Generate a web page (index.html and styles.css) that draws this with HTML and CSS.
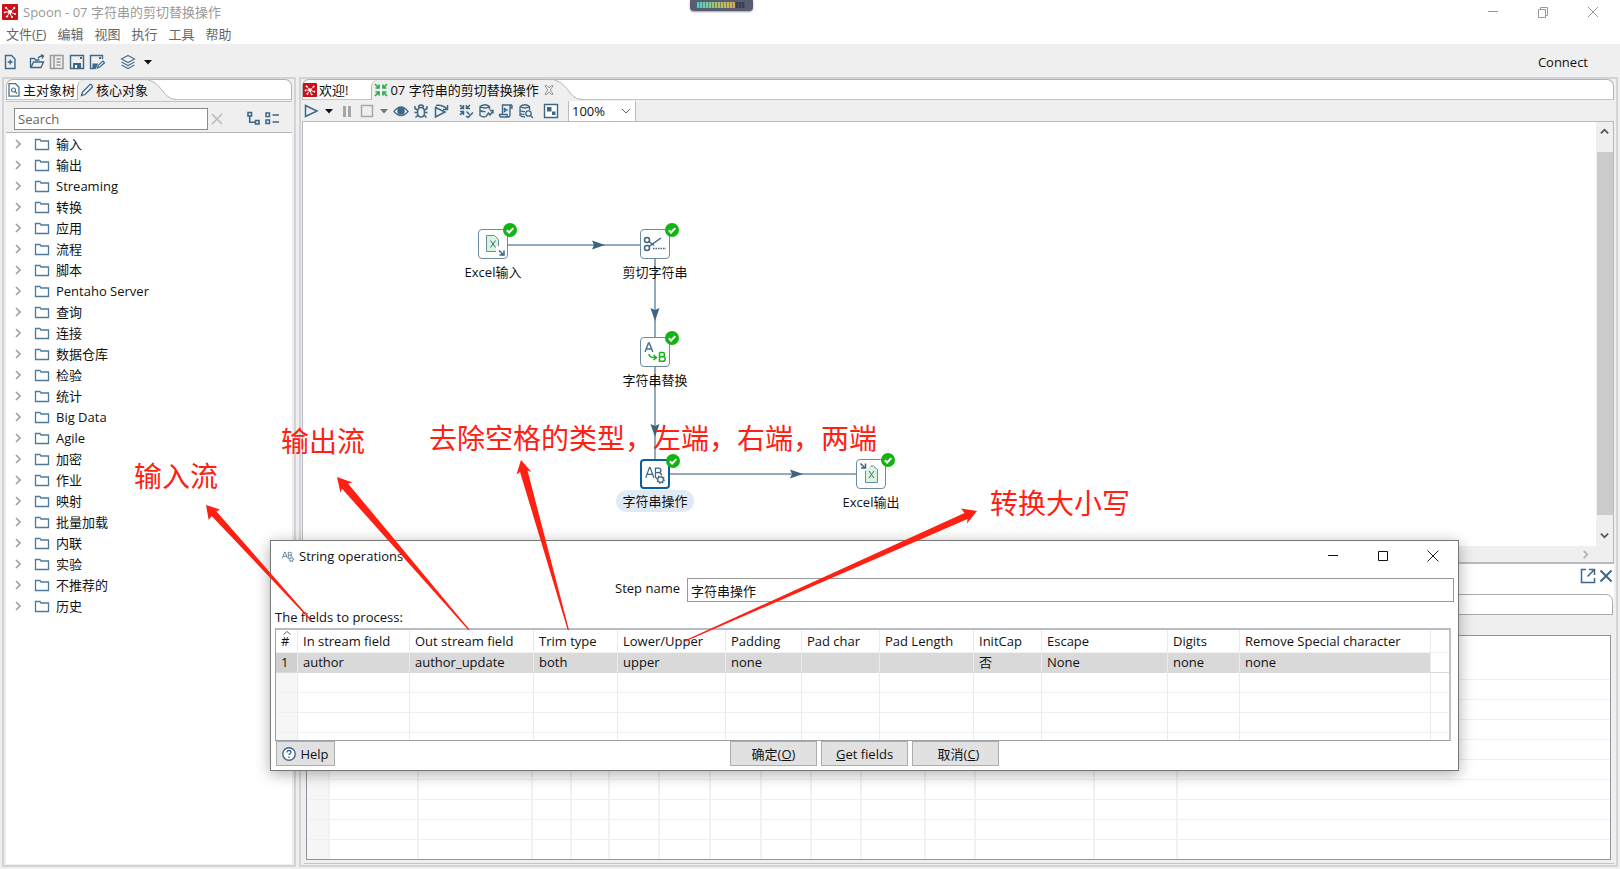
FILE: index.html
```html
<!DOCTYPE html>
<html lang="zh-CN">
<head>
<meta charset="utf-8">
<title>Spoon - 07 字符串的剪切替换操作</title>
<link rel="stylesheet" href="styles.css">
</head>
<body>
<svg class="defs" aria-hidden="true">
  <symbol id="logo" viewBox="0 0 16 16"><rect width="16" height="16" rx="1" fill="#cc0f16"/><g stroke="#fff" stroke-width="1" fill="#fff"><path d="M8 8 4 3.500M8 8l4.500-4M8 8H3M8 8l5 2M8 8l-3 4.500M8 8l1.500 5" fill="none"/><circle cx="8" cy="8" r="1.400"/><circle cx="4" cy="3.800" r=".7"/><circle cx="12.300" cy="4" r=".7"/><circle cx="2.800" cy="8.500" r=".6"/><circle cx="13" cy="10" r=".6"/><circle cx="5" cy="12.500" r=".7"/><circle cx="10" cy="13" r=".6"/></g></symbol>
  <symbol id="folder" viewBox="0 0 16 14"><path d="M1.500 12.500v-10h4.500l1 1.500h7.500v8.500z" fill="#fff" stroke="#4d7a9b" stroke-width="1.300"/></symbol>
  <symbol id="chev" viewBox="0 0 8 10"><path d="m2 1 4 4-4 4" fill="none" stroke="#a0a0a0" stroke-width="1.700"/></symbol>
  <symbol id="down" viewBox="0 0 8 8"><path d="M0 2h8L4 6.500z" fill="currentColor"/></symbol>
  <symbol id="check" viewBox="0 0 14 14"><circle cx="7" cy="7" r="7" fill="#12b312"/><path d="m3.800 7.200 2.300 2.300 4.200-4.400" fill="none" stroke="#fff" stroke-width="2"/></symbol>
  <symbol id="x" viewBox="0 0 12 12"><path d="m1 1 10 10M11 1 1 11" stroke="currentColor" stroke-width="1.500"/></symbol>
  <symbol id="abgear" viewBox="0 0 28 28"><g fill="none" stroke="#3d6480" stroke-width="1.300"><path d="m4 18 4-11h.8l4 11M5.500 14.500h6M14.500 18V7.600h3q3 0 3 2.400t-3 2.500h-3M17.500 12.500q3.500.2 3.500 2.500"/><path d="M14.500 18h1.500"/><circle cx="20" cy="20" r="3"/><circle cx="20" cy="20" r="4" stroke-dasharray="1.500 1.600"/></g></symbol>
</svg>

<header class="title">
  <svg class="i16"><use href="#logo"/></svg>
  <span class="title-text">Spoon - 07 字符串的剪切替换操作</span>
  <div class="winbtns">
    <button aria-label="最小化"><svg viewBox="0 0 12 12"><path d="M1 5.500h10" stroke="#999"/></svg></button>
    <button aria-label="还原"><svg viewBox="0 0 12 12"><path d="M1.500 3.500h7v8h-7zM3.500 3.500v-2h7v8h-2" fill="none" stroke="#999"/></svg></button>
    <button aria-label="关闭"><svg viewBox="0 0 12 12"><path d="m1 1 10 10M11 1 1 11" stroke="#999"/></svg></button>
  </div>
</header>
<div class="meter"><i class="bars"></i></div>
<nav class="menu">
  <a href="#">文件(<u>F</u>)</a><a href="#">编辑</a><a href="#">视图</a><a href="#">执行</a><a href="#">工具</a><a href="#">帮助</a>
</nav>
<div class="maintools">
  <button class="ib" aria-label="新建"><svg viewBox="0 0 16 16"><path d="M3.500 1.500h6l3.500 3.500v9.500H3.500zM8.200 5.500v5M5.700 8h5" fill="none" stroke="#3d6787" stroke-width="1.400"/></svg></button>
  <button class="ib open" aria-label="打开"><svg viewBox="0 0 16 16"><path d="M1.500 13.500v-9h4l1 1.500h4M2 13.500l2.500-5.500h10l-2.500 5.500zM9 4.500q1-2.500 5-2.500M12 .7l2.500 1.300-1.500 2.500" fill="none" stroke="#3d6787" stroke-width="1.300"/></svg></button>
  <button class="ib" aria-label="资源库"><svg viewBox="0 0 16 16"><path d="M1.500 1.500h12.500v13h-12.500zM5 1.500v13M7.500 5h4M7.500 8h4M7.500 11h4" fill="none" stroke="#999" stroke-width="1.500"/></svg></button>
  <button class="ib" aria-label="保存"><svg viewBox="0 0 16 16"><path d="M1.500 1.500h13v13h-13z" fill="none" stroke="#3d6787" stroke-width="1.400"/><path d="M4 9h8v5.500H4zM11 3h2v2h-2z" fill="#3d6787"/><path d="M6 11h2v3H6z" fill="#fff"/></svg></button>
  <button class="ib" aria-label="另存为"><svg viewBox="0 0 16 16"><path d="M13.500 5V1.500h-12v13h5" fill="none" stroke="#3d6787" stroke-width="1.400"/><path d="M3.500 9.500H9L7 14.500H3.500zM10 3h2v2h-2z" fill="#3d6787"/><path d="m8.500 14 1-3 4.500-4 1.500 1.800-4.500 4z" fill="#fff" stroke="#3d6787" stroke-width="1.200"/></svg></button>
  <button class="ib layers" aria-label="透视图"><svg viewBox="0 0 16 16"><path d="M8 1.500 14.500 5 8 8.500 1.500 5zM1.500 8 8 11.500 14.500 8M1.500 11 8 14.500l6.500-3.500" fill="none" stroke="#4d7592" stroke-width="1.200"/></svg></button>
  <button class="caret" aria-label="更多"><svg><use href="#down"/></svg></button>
  <a class="connect" href="#">Connect</a>
</div>

<main class="work">
  <section class="panel">
    <div class="tabs">
      <button class="tab"><svg class="i14" viewBox="0 0 14 14"><path d="M2 .7h6.500l3.500 3.500v9H2z" fill="none" stroke="#4d7592" stroke-width="1.300"/><circle cx="6.500" cy="7" r="2" fill="none" stroke="#4d7592" stroke-width="1.200"/><path d="m8 8.500 2 2" stroke="#4d7592" stroke-width="1.300"/></svg>主对象树</button>
      <button class="tab on"><svg class="i14" viewBox="0 0 14 14"><path d="m1.500 12.500 1-3.500 7.500-7.500q2-.5 2.500 2.500L5 11.500z" fill="none" stroke="#3d6787" stroke-width="1.300"/></svg>核心对象</button>
      <svg class="tail" viewBox="0 0 32 21"><path d="M0 .5C18 .5 18 20.500 32 20.500V21H0z" fill="#efefef"/><path d="M0 .5C18 .5 18 20.500 32 20.500" fill="none" stroke="#b4b4b4"/></svg>
    </div>
    <div class="searchbar">
      <input class="search" type="text" placeholder="Search" aria-label="Search">
      <button class="clear" aria-label="清除"><svg><use href="#x"/></svg></button>
      <button class="ib expand" aria-label="展开"><svg viewBox="0 0 16 16"><path d="M3 1.500h3.500V5H3zM10.500 9.500H14V13h-3.500zM4.700 5v6.200h5.800" fill="none" stroke="#3d6787" stroke-width="1.600"/></svg></button>
      <button class="ib" aria-label="折叠"><svg viewBox="0 0 16 16"><path d="M2 2h3.500v3.500H2zM2 9h3.500v3.500H2zM8.500 4H15M8.500 11H15" fill="none" stroke="#3d6787" stroke-width="1.500"/></svg></button>
    </div>
    <ul class="tree" id="tree"></ul>
  </section>

  <section class="panel right">
    <div class="tabs">
      <button class="tab"><svg class="i14"><use href="#logo"/></svg>欢迎!</button>
      <button class="tab on wide"><svg class="i14" viewBox="0 0 14 14"><path d="m1 1 4 4M13 1 9 5M1 13l4-4M13 13 9 9M1.500 5H5V1.500M9 1.500V5h3.500M1.500 9H5v3.500M12.500 9H9v3.500" fill="none" stroke="#2faa4c" stroke-width="1.700"/></svg>07 字符串的剪切替换操作<svg class="tabx" viewBox="0 0 10 10"><path d="M1 .7h2l2 2.500 2-2.500h2L6.300 5 9 9.300H7L5 6.800 3 9.300H1L3.700 5z" fill="#fff" stroke="#777" stroke-width=".8"/></svg></button>
      <svg class="tail" viewBox="0 0 32 21"><path d="M0 .5C18 .5 18 20.500 32 20.500V21H0z" fill="#efefef"/><path d="M0 .5C18 .5 18 20.500 32 20.500" fill="none" stroke="#b4b4b4"/></svg>
    </div>
    <div class="tools">
      <button class="ib" aria-label="运行"><svg viewBox="0 0 16 16"><path d="M2.500 2.500 14 8 2.500 13.500z" fill="none" stroke="#3d6787" stroke-width="1.500"/></svg></button>
      <button class="caret c12" aria-label="运行选项"><svg><use href="#down"/></svg></button>
      <button class="ib" aria-label="暂停"><svg viewBox="0 0 16 16"><path d="M4 3h3v11H4zM9 3h3v11H9z" fill="#a6a6a6"/></svg></button>
      <button class="ib" aria-label="停止"><svg viewBox="0 0 16 16"><path d="M2.500 2.500h11v11h-11z" fill="none" stroke="#a6a6a6" stroke-width="1.500"/></svg></button>
      <button class="caret c10" aria-label="停止选项"><svg><use href="#down"/></svg></button>
      <button class="ib" aria-label="预览"><svg viewBox="0 0 16 16"><path d="M1 8.500q7-9 14 0q-7 8-14 0z" fill="#fff" stroke="#3d6787" stroke-width="1.300"/><circle cx="8" cy="8" r="3.800" fill="#3d6787"/></svg></button>
      <button class="ib" aria-label="调试"><svg viewBox="0 0 16 16"><path d="M8 4.500c3 0 3.500 2 3.500 5s-1.500 4.500-3.500 4.500-3.500-1.500-3.500-4.500.5-5 3.500-5zM5.500 4.500q0-2.500 2.500-2.500t2.500 2.500M4.500 7 2 5.500V3M11.500 7 14 5.500V3M4.500 9.500H1.500M11.500 9.500h3M5 12l-2.500 2.500M11 12l2.500 2.500" fill="none" stroke="#3d6787" stroke-width="1.500"/></svg></button>
      <button class="ib" aria-label="重放"><svg viewBox="0 0 16 16"><path d="M2.500 4.500 12 9l-9.500 5zM3 2.500q6-1.500 11 3.500M14.500 2v4.500H10" fill="none" stroke="#3d6787" stroke-width="1.500"/></svg></button>
      <button class="ib gap5" aria-label="校验"><svg viewBox="0 0 16 16"><path d="m2 2 3.500 3.500M12 2 8.500 5.500M2 12l3.500-3.500M2 5.500h3.500V2M8.500 2v3.500H12M2 8.500h3.500V12M8.500 8.500l3 3M8 13l2 1.500L15 9.500" fill="none" stroke="#3d6787" stroke-width="1.500"/></svg></button>
      <button class="ib" aria-label="影响分析"><svg viewBox="0 0 16 16"><path d="M2 3.500q5-3.500 9.500 0v3M2 3.500v9q2 1.500 5 1.500M2 3.500q5 3 9.500 0M2 7.500q3 1.500 5.500 1M7.500 14l3-4 1.500 2 3-4M12 7.500h3v3" fill="none" stroke="#3d6787" stroke-width="1.400"/></svg></button>
      <button class="ib" aria-label="SQL"><svg viewBox="0 0 16 16"><path d="M4.500 11V2h9.500q-2 0-2 3v7q0 2-2 2H3q-1.500 0-1.500-2.500h7.500q0 2.500 1.500 2.500M14 2v3h-2M6.500 5.500 9 7 6.500 8.500z" fill="none" stroke="#3d6787" stroke-width="1.400"/></svg></button>
      <button class="ib" aria-label="浏览数据库"><svg viewBox="0 0 16 16"><path d="M2 3.500q5-3.500 9.500 0v3.500M2 3.500v9q2 1.500 5 1.500M2 3.500q5 3 9.500 0M2 7.500q3 1.500 5 1M2 10.500q2 1 4.500 1M12.500 12.500l2.500 2.500" fill="none" stroke="#3d6787" stroke-width="1.300"/><circle cx="10.500" cy="10.500" r="2.700" fill="none" stroke="#3d6787" stroke-width="1.300"/></svg></button>
      <button class="ib gap5" aria-label="显示结果"><svg viewBox="0 0 16 16"><path d="M1.500 1.500h13v13h-13z" fill="#fff" stroke="#3d6787" stroke-width="1.400"/><path d="M4 4h4.500v4.500H4zM9 8.500h3.500V12H9z" fill="#3d6787"/></svg></button>
      <label class="zoom"><select aria-label="缩放"><option>100%</option></select><svg viewBox="0 0 10 10"><path d="m1 3 4 4 4-4" fill="none" stroke="#666"/></svg></label>
    </div>
    <div class="editor">
      <div class="canvas">
        <svg class="hops" width="700" height="420">
          <g stroke="#6f8fa8" stroke-width="1.500"><path d="M204 123h134M352 137v80M352 245v92M367 352h188"/></g>
          <g fill="#3d6480"><path d="m289 118.500 13 4.500-13 4.500 2-4.500zM347.500 186l4.500 13 4.500-13-4.500 2zM347.500 302l4.500 13 4.500-13-4.500 2zM487 347.500l13 4.500-13 4.500 2-4.500z"/></g>
        </svg>
        <div class="node n1"><span class="box"><svg viewBox="0 0 28 28"><path d="M7.500 5.500h8l4 4v12h-12z" fill="#daf3dc" stroke="#6b8ca3"/><path d="m11.500 10.500 5 7M16.500 10.500l-5 7" stroke="#3d6480"/><path d="m17 16 9 1v9h-9z" fill="#fff"/><path d="m20 20.500 4.500 4.500M25 20.500V25h-4.500" fill="none" stroke="#3d6480" stroke-width="1.500"/></svg><svg class="ok"><use href="#check"/></svg></span><span class="lbl">Excel输入</span></div>
        <div class="node n2"><span class="box"><svg viewBox="0 0 28 28"><g fill="none" stroke="#3d6480" stroke-width="1.500"><circle cx="6" cy="10" r="2.500"/><circle cx="6" cy="18" r="2.500"/><path d="m8 11.500 5 4M8 16.500 20 8"/><path d="M12 18.500h13" stroke-dasharray="1.500 1"/></g></svg><svg class="ok"><use href="#check"/></svg></span><span class="lbl">剪切字符串</span></div>
        <div class="node n3"><span class="box"><svg viewBox="0 0 28 28"><path d="m4 14 3.500-9h.8l3.500 9M5.200 11h5.500" fill="none" stroke="#4d7592" stroke-width="1.500"/><path d="M18.500 14.500v8.800h3.200q2.500 0 2.500-2.400t-2.500-2.200h-3M18.500 14.500h3q2 0 2 2t-2 2.200M8 16q0 4 7 3.500M12.500 17l3 2.500-3 2.500" fill="none" stroke="#12b312" stroke-width="1.500"/></svg><svg class="ok"><use href="#check"/></svg></span><span class="lbl">字符串替换</span></div>
        <div class="node n4"><span class="box sel"><svg><use href="#abgear"/></svg><svg class="ok"><use href="#check"/></svg></span><span class="lbl pill">字符串操作</span></div>
        <div class="node n5"><span class="box"><svg viewBox="0 0 28 28"><path d="M8.500 10.500v12h12v-13l-4-3.500h-3" fill="#daf3dc" stroke="#6b8ca3"/><path d="m12 11 5 7M17 11l-5 7" stroke="#3d6480"/><path d="m3.500 3.500 4.500 4.500M8.500 3.500V8H4" fill="none" stroke="#3d6480" stroke-width="1.500"/></svg><svg class="ok"><use href="#check"/></svg></span><span class="lbl">Excel输出</span></div>
      </div>
      <div class="vscroll"><svg viewBox="0 0 10 10"><path d="m1 7 4-4 4 4" fill="none" stroke="#555" stroke-width="2"/></svg><i class="thumb"></i><svg viewBox="0 0 10 10"><path d="m1 3 4 4 4-4" fill="none" stroke="#555" stroke-width="2"/></svg></div>
      <div class="hscroll"><svg viewBox="0 0 10 10"><path d="m3 1 4 4-4 4" fill="none" stroke="#b0b0b0" stroke-width="1.800"/></svg></div>
    </div>
    <div class="reshead">
      <button class="ib" aria-label="最大化"><svg viewBox="0 0 16 16"><path d="M6 1.500H1.500v13h13V10M9 1.500h5.500V7M14 2 7.500 8.500" fill="none" stroke="#3d6787" stroke-width="1.500"/></svg></button>
      <button class="ib" aria-label="关闭结果"><svg viewBox="0 0 16 16"><path d="m2.500 2.500 11 11M13.500 2.500l-11 11" stroke="#3d6787" stroke-width="2"/></svg></button>
    </div>
    <div class="results">
      <div class="restabs"></div>
      <div class="resbar"></div>
      <div class="resgrid" id="resgrid"></div>
    </div>
  </section>
</main>

<section class="dialog" role="dialog" aria-label="String operations">
  <div class="dtitle"><svg class="i16"><use href="#abgear"/></svg><span>String operations</span>
    <div class="dwin">
      <button aria-label="Minimize"><svg viewBox="0 0 12 12"><path d="M1 5.500h10" stroke="#111"/></svg></button>
      <button aria-label="Maximize"><svg viewBox="0 0 12 12"><path d="M1.500 1.500h9v9h-9z" fill="none" stroke="#111"/></svg></button>
      <button aria-label="Close"><svg viewBox="0 0 12 12"><path d="m.5.5 11 11M11.500.5l-11 11" stroke="#222"/></svg></button>
    </div>
  </div>
  <div class="step"><label for="stepname">Step name</label><input id="stepname" type="text" value="字符串操作"></div>
  <p class="cap">The fields to process:</p>
  <div class="gridbox">
    <table class="fields">
      <colgroup><col class="w22"><col class="w112"><col class="w124"><col class="w84"><col class="w108"><col class="w76"><col class="w78"><col class="w94"><col class="w68"><col class="w126"><col class="w72"><col class="w190"><col></colgroup>
      <thead><tr><th class="num"><svg class="sort" viewBox="0 0 8 4"><path d="m.5 3.500 3.500-3 3.500 3" fill="none" stroke="#666"/></svg>#</th><th>In stream field</th><th>Out stream field</th><th>Trim type</th><th>Lower/Upper</th><th>Padding</th><th>Pad char</th><th>Pad Length</th><th>InitCap</th><th>Escape</th><th>Digits</th><th>Remove Special character</th><th></th></tr></thead>
      <tbody id="rows"><tr class="hit"><td>1</td><td>author</td><td>author_update</td><td>both</td><td>upper</td><td>none</td><td></td><td></td><td>否</td><td>None</td><td>none</td><td>none</td><td></td></tr></tbody>
    </table>
  </div>
  <div class="foot">
    <button class="btn help"><svg class="i14" viewBox="0 0 14 14"><circle cx="7" cy="7" r="6.200" fill="#fff" stroke="#3d6787" stroke-width="1.400"/><path d="M5 5.500q0-2 2-2t2 1.800q0 1-1.200 1.500-.8.400-.8 1.200M7 9.500V11" fill="none" stroke="#3d6787" stroke-width="1.300"/></svg>Help</button>
    <div class="acts"><button class="btn">确定(<u>O</u>)</button><button class="btn"><u>G</u>et fields</button><button class="btn cancel">取消(<u>C</u>)</button></div>
  </div>
</section>

<div class="notes">
  <svg width="1200" height="660"><g fill="#ff2014"><path d="m206 505 14 4.500-3.500 2 96 109.500-.8.700L211.700 516l-3 4z"/><path d="m337 477 15.500 5.500-4.500 1L469.500 629.500l-1 .7L341.800 488.500l-1.300 4.500z"/><path d="m521 460 10.500 12-4-1.500L569 630l-1.200.2L520 472l-3.500 2.500z"/><path d="m977 511-16-2.500 3.500 4.500L683.500 641l.5 1 283.500-123-.5 4.500z"/></g></svg>
  <span class="a1">输入流</span><span class="a2">输出流</span><span class="a3">去除空格的类型，左端，右端，两端</span><span class="a4">转换大小写</span>
</div>
<script src="app.js"></script>
</body>
</html>
```
FILE: styles.css
```css
* { box-sizing: border-box; }
body {
  margin: 0; min-height: 100vh; display: flex; flex-direction: column; position: relative;
  overflow: hidden; background: #efefef; color: #111;
  font: 13px/20px "Open Sans", "Noto Sans CJK SC", sans-serif;
}
button, input, select { font: inherit; color: inherit; margin: 0; padding: 0; border: 0; background: none; border-radius: 0; }
a { color: inherit; text-decoration: none; }
svg { display: block; flex: none; }
.defs { position: absolute; width: 0; height: 0; }
.i16 { width: 16px; height: 16px; }
.i14 { width: 14px; height: 14px; }

.title { display: flex; align-items: center; gap: 5px; height: 24px; padding: 0 2px; background: #fff; color: #999; }
.title-text { flex: 1; }
.winbtns, .dwin { display: flex; }
.winbtns button, .dwin button { width: 50px; height: 24px; display: grid; place-items: center; }
.winbtns svg, .dwin svg { width: 12px; height: 12px; }
.meter { position: absolute; left: 690px; top: 0; width: 63px; height: 11px; padding: 2px 7px; background: #5a5d70; border-radius: 0 0 4px 4px; box-shadow: 0 1px 2px #9a9ca8; }
.bars { display: block; width: 48px; height: 6px; background: repeating-linear-gradient(90deg, transparent 0 2px, #5a5d7099 2px 3px), linear-gradient(90deg, #45d3d0, #9fc66a 40%, #e5b04c 78%, #3b3e50 79%); }
.menu { display: flex; gap: 11px; height: 20px; padding-left: 6px; background: #fff; color: #666; }
.maintools { display: flex; align-items: center; gap: 4px; height: 33px; padding: 3px 32px 0 2px; }
.ib { width: 16px; height: 16px; flex: none; }
.ib svg { width: 16px; height: 16px; }
.open { margin-left: 7px; }
.layers { margin-left: 11px; }
.caret { width: 16px; display: grid; place-items: center; color: #111; }
.caret svg { width: 8px; height: 8px; }
.c12 { width: 12px; }
.c10 { width: 10px; color: #777; }
.connect { margin-left: auto; }

.work { flex: 1; display: grid; grid-template-columns: 294px 1fr; gap: 3px; padding: 0 2px 2px; }
.panel { display: flex; flex-direction: column; min-width: 0; padding: 0 2px 1px; border: 2px solid #d2d3d6; background: #efefef; }
.right { padding: 0 2px 1px 1px; }
.tabs { position: relative; z-index: 0; display: flex; height: 21px; background: linear-gradient(#c4c4c4, #c4c4c4) bottom / 100% 1px no-repeat #fff; border: 1px solid #b4b4b4; border-width: 1px 1px 0; border-radius: 7px 7px 0 0; }
.tab { display: flex; align-items: center; gap: 2px; padding: 0; white-space: nowrap; height: 20px; }
.tab.on { background: #efefef; border-left: 1px solid #b4b4b4; border-radius: 7px 0 0 0; padding-left: 2px; }
.tab + .tab { margin-left: 2px; }
.tab + .tab.wide { margin-left: 23px; }
.tabx { width: 10px; height: 10px; margin-left: 3px; }
.tail { position: relative; z-index: -1; width: 32px; height: 21px; margin: -1px 0 0 -4px; }
.searchbar { display: flex; align-items: center; height: 32px; padding: 3px 10px 0 8px; margin-top: 1px; border-top: 1px solid #c4c4c4; border-bottom: 1px solid #b4b4b4; }
.search { width: 194px; height: 22px; padding: 0 3px; border: 1px solid #8a8a8a; background: #fff; }
.search::placeholder { color: #666; opacity: 1; }
.clear { width: 12px; height: 12px; margin-left: 3px; color: #bbb; }
.clear svg { width: 12px; height: 12px; }
.expand { margin: 0 3px 0 22px; }
.tree { flex: 1; margin: 0; padding: 0 0 0 8px; list-style: none; background: #fff; }
.tree li { display: flex; align-items: center; height: 21px; }
.tree button { width: 8px; height: 10px; }
.tree button svg { width: 8px; height: 10px; }
.tree .fold { width: 16px; height: 14px; margin: 0 6px 0 12px; }

.tools { display: flex; align-items: center; gap: 4px; height: 21px; padding-left: 1px; }
.gap5 { margin-left: 5px; }
.zoom { display: flex; align-items: center; width: 68px; height: 20px; margin-left: 5px; padding: 0 4px 0 3px; background: #fff; border: 1px solid #bbb; border-width: 0 1px; }
.zoom select { flex: 1; appearance: none; }
.zoom svg { width: 10px; height: 10px; }
.editor { display: grid; grid-template-columns: 1fr 17px; grid-template-rows: 424px 16px; border: 1px solid #b8bac0; border-bottom-width: 2px; }
.canvas { position: relative; background: #fff; overflow: hidden; }
.hops { position: absolute; left: 0; top: 0; }
.node { position: absolute; width: 80px; display: flex; flex-direction: column; align-items: center; }
.box { position: relative; width: 30px; height: 30px; border: 1px solid #6b8ca3; border-radius: 4px; background: #fff; }
.box.sel { border: 2px solid #0b5fa5; }
.box svg { width: 100%; height: 100%; }
.box .ok { position: absolute; left: 24px; top: -7px; width: 14px; height: 14px; }
.lbl { margin-top: 3px; padding: 0 6px; white-space: nowrap; }
.pill { margin-top: 1px; height: 22px; line-height: 22px; background: #e0eaf4; border-radius: 11px; }
.n1 { left: 150px; top: 107px; }
.n2 { left: 312px; top: 107px; }
.n3 { left: 312px; top: 215px; }
.n4 { left: 312px; top: 337px; }
.n5 { left: 528px; top: 337px; }
.vscroll { display: flex; flex-direction: column; align-items: center; gap: 16px; padding: 5px 0 6px; background: #efefef; }
.vscroll svg, .hscroll svg { width: 9px; height: 9px; }
.vscroll .thumb { flex: 1; width: 16px; background: #cbcbcb; }
.hscroll { grid-column: 1 / 3; display: flex; align-items: center; justify-content: flex-end; padding-right: 23px; background: #efefef; }
.reshead { display: flex; justify-content: flex-end; gap: 2px; height: 30px; padding-top: 4px; background: #fff; }
.results { flex: 1; display: flex; flex-direction: column; margin-left: 2px; padding: 0 3px 3px 2px; background: linear-gradient(#fff, #fff) top / 100% 10px no-repeat #efefef; border-bottom: 1px solid #c4c4c4; }
.restabs { height: 21px; margin: 0 -2px; background: #fff; border: 1px solid #aaa; border-radius: 0 7px 0 0; }
.resbar { height: 20px; }
.resgrid { flex: 1; display: grid; grid-template-columns: 23px 89px 114px 39px 38px 50px 51px 51px 50px 50px 64px 50px 119px 83px 1fr; border: 1px solid #8f959f; background: #fff; }
.resgrid i { border-right: 2px solid #edf2f7; background: repeating-linear-gradient(transparent 0 19px, #f0f0f0 19px 20px); background-position: 0 24px; background-repeat: no-repeat; }
.resgrid i:first-child { background-color: #f6f6f6; }
.resgrid i:last-child { border-right: 0; }

.dialog { position: absolute; left: 270px; right: 161px; top: 540px; padding-bottom: 4px; background: #fff; border: 1px solid #777; box-shadow: 0 3px 14px rgba(0, 0, 0, .32); }
.dtitle { display: flex; align-items: center; gap: 3px; height: 29px; padding-left: 9px; }
.dtitle span { flex: 1; }
.step { display: grid; grid-template-columns: 409px 1fr; gap: 7px; padding: 8px 4px 0 0; }
.step label { text-align: right; line-height: 20px; }
.step input { height: 24px; padding: 0 3px; border: 1px solid #999; }
.cap { margin: 5px 0 0 4px; height: 21px; line-height: 20px; }
.gridbox { margin: 0 7px 0 4px; height: 113px; overflow: hidden; border: 1px solid #9aa0a8; border-top: 2px solid #b9bac2; border-right: 2px solid #c3c4ca; }
.fields { width: 100%; border-collapse: separate; border-spacing: 0; table-layout: fixed; }
.w22 { width: 22px; } .w112 { width: 112px; } .w124 { width: 124px; } .w84 { width: 84px; } .w108 { width: 108px; }
.w76 { width: 76px; } .w78 { width: 78px; } .w94 { width: 94px; } .w68 { width: 68px; } .w126 { width: 126px; } .w72 { width: 72px; } .w190 { width: 191px; }
th, td { padding: 0 0 0 5px; height: 20px; text-align: left; font-weight: normal; white-space: nowrap; line-height: 19px; border-right: 1px solid #e6ecf3; border-bottom: 1px solid #f0f0f0; }
th { height: 23px; padding-top: 1px; }
.num { position: relative; }
.sort { position: absolute; left: 7px; top: 1px; width: 8px; height: 4px; }
td:first-child { background: #f6f6f6; }
.hit td { background: #d9d9d9; border-bottom-color: #d9d9d9; }
.hit td:first-child { background: #d0d0d0; }
th:last-child, td:last-child { border-right: 0; }
.hit td:last-child { background: #fff; }
.foot { position: relative; display: flex; justify-content: center; padding: 0 3px; }
.btn { width: 87px; height: 25px; background: #e1e1e1; border: 1px solid #adadad; }
.cancel { padding-left: 6px; }
.help { position: absolute; left: 5px; top: 0; width: 59px; display: flex; align-items: center; justify-content: center; gap: 4px; }
.acts { display: flex; gap: 4px; }

.notes { position: absolute; inset: 0; overflow: hidden; pointer-events: none; color: #ff2014; font-size: 28px; line-height: 36px; white-space: nowrap; font-family: "Noto Sans CJK SC", sans-serif; }
.notes span { position: absolute; }
.a1 { left: 134px; top: 457px; }
.a2 { left: 281px; top: 422px; }
.a3 { left: 429px; top: 419px; }
.a4 { left: 990px; top: 484px; }
```
FILE: app.js
```js
const names = ['输入', '输出', 'Streaming', '转换', '应用', '流程', '脚本', 'Pentaho Server', '查询', '连接', '数据仓库', '检验', '统计', 'Big Data', 'Agile', '加密', '作业', '映射', '批量加载', '内联', '实验', '不推荐的', '历史'];
document.getElementById('tree').innerHTML = names.map(n =>
  `<li><button aria-label="展开 ${n}"><svg><use href="#chev"/></svg></button><svg class="fold"><use href="#folder"/></svg>${n}</li>`).join('');
document.getElementById('resgrid').innerHTML = '<i></i>'.repeat(15);
document.getElementById('rows').insertAdjacentHTML('beforeend', ('<tr>' + '<td></td>'.repeat(13) + '</tr>').repeat(4));
```
